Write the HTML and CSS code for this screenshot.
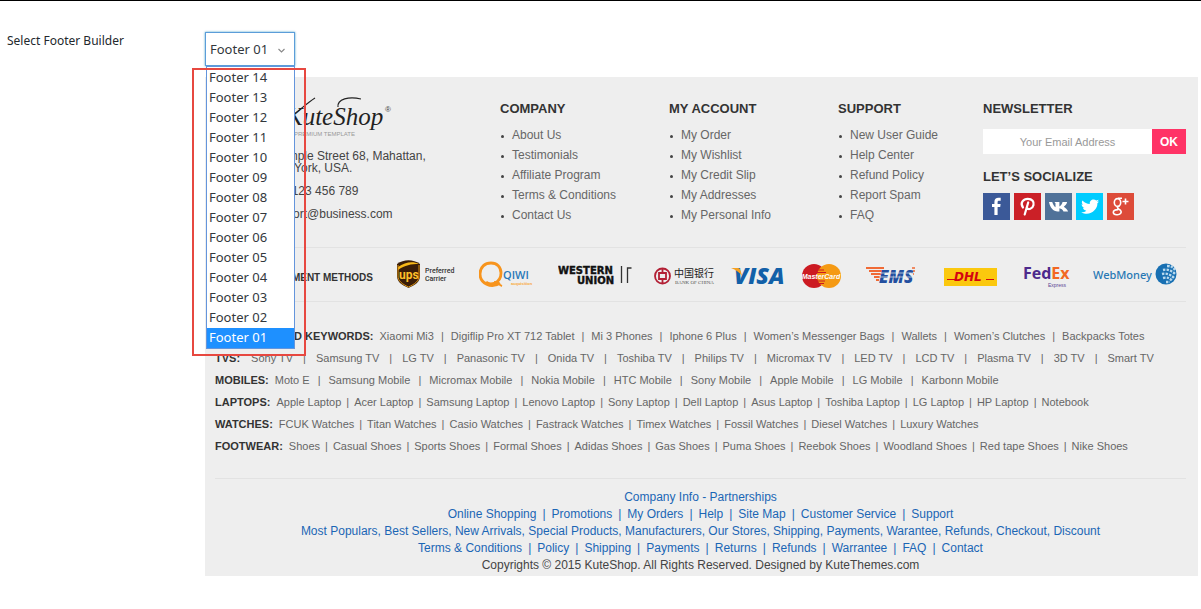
FILE: index.html
```html
<!DOCTYPE html>
<html lang="en">
<head>
<meta charset="utf-8">
<title>Footer Builder</title>
<link rel="stylesheet" href="styles.css">
</head>
<body>
<main class="option-row">
  <label class="option-label" for="footer-select">Select Footer Builder</label>
  <div class="option-field">
    <div class="picker">
      <select class="picker-control" id="footer-select"><option>Footer 01</option></select>
      <svg class="picker-arrow" viewBox="0 0 8 6" aria-hidden="true"><path d="M1 1l3 3 3-3" fill="none" stroke="#888" stroke-width="1.1"/></svg>
      <select class="picker-list" size="14" aria-label="Footer options">
        <option>Footer 14</option><option>Footer 13</option><option>Footer 12</option><option>Footer 11</option>
        <option>Footer 10</option><option>Footer 09</option><option>Footer 08</option><option>Footer 07</option>
        <option>Footer 06</option><option>Footer 05</option><option>Footer 04</option><option>Footer 03</option>
        <option>Footer 02</option><option selected>Footer 01</option>
      </select>
      <div class="highlight"></div>
    </div>

    <footer class="preview">
      <section class="columns">
        <address class="contact">
          <svg class="brand" viewBox="0 0 190 44" role="img" aria-label="KuteShop">
            <text x="71" y="30" font-family="Liberation Serif" font-style="italic" font-size="25" fill="#222">KuteShop</text>
            <path d="M74 23C84 16 92 8 100 3M123 12C122 4 134 1 146 4" fill="none" stroke="#222" stroke-width="1.2"/>
            <text x="170" y="17" font-family="Liberation Sans" font-size="8" fill="#444">®</text>
            <text x="140" y="41" text-anchor="end" font-family="Liberation Sans" font-size="6" fill="#999">PREMIUM TEMPLATE</text>
          </svg>
          <p class="street">Example Street 68, Mahattan,<br>New York, USA.</p>
          <p class="line">(00) 123 456 789</p>
          <p class="line">support@business.com</p>
        </address>
        <nav>
          <h2>COMPANY</h2>
          <ul class="links"><li><a href="#">About Us</a></li><li><a href="#">Testimonials</a></li><li><a href="#">Affiliate Program</a></li><li><a href="#">Terms &amp; Conditions</a></li><li><a href="#">Contact Us</a></li></ul>
        </nav>
        <nav>
          <h2>MY ACCOUNT</h2>
          <ul class="links"><li><a href="#">My Order</a></li><li><a href="#">My Wishlist</a></li><li><a href="#">My Credit Slip</a></li><li><a href="#">My Addresses</a></li><li><a href="#">My Personal Info</a></li></ul>
        </nav>
        <nav>
          <h2>SUPPORT</h2>
          <ul class="links"><li><a href="#">New User Guide</a></li><li><a href="#">Help Center</a></li><li><a href="#">Refund Policy</a></li><li><a href="#">Report Spam</a></li><li><a href="#">FAQ</a></li></ul>
        </nav>
        <div>
          <h2>NEWSLETTER</h2>
          <form class="subscribe">
            <input type="email" placeholder="Your Email Address" aria-label="Your Email Address">
            <button type="button">OK</button>
          </form>
          <h2>LET’S SOCIALIZE</h2>
          <div class="social">
            <a href="#" aria-label="Facebook"><svg viewBox="0 0 27 27"><path fill="#3b5998" d="M0 0h27v27H0z"/><path fill="#fff" d="M11.400 22v-8H9v-3h2.400V9c0-2.900 1.600-4.200 4-4.200h2.300v3h-1.600c-1.200 0-1.500.5-1.500 1.500V11h3l-.4 3h-2.600v8z"/></svg></a>
            <a href="#" aria-label="Pinterest"><svg viewBox="0 0 27 27"><path fill="#cb2027" d="M0 0h27v27H0z"/><path fill="none" stroke="#fff" stroke-width="2.200" stroke-linecap="round" d="M9 14.500C5.500 10 9.500 5.800 13.800 5.800c4.500 0 6.500 3 5.700 6.200-.9 4-5.200 5.300-6.900 2.600M14.200 9.500L10.700 21.500"/></svg></a>
            <a href="#" aria-label="VK"><svg viewBox="0 0 27 27"><path fill="#507299" d="M0 0h27v27H0z"/><path fill="#fff" d="M4 9h3.200c.9 2.500 2 4.500 3.300 5.200v-4L9.400 9h5v4.500c1.500-.8 2.600-2.600 3.200-4.500h4.500c-.3 2-1.900 3.700-3.300 4.800 1.700 1 3.500 2.700 4.300 4.700h-4.600c-.8-1.700-2.200-3-4.100-3.300v3.300h-1.700C8.200 18.500 5 14.500 4 9z"/></svg></a>
            <a href="#" aria-label="Twitter"><svg viewBox="0 0 27 27"><path fill="#0cf" d="M0 0h27v27H0z"/><path fill="#fff" d="M6.500 7.500c2 2.200 4.500 3.500 7.300 3.600-.7-3.800 3.700-6 6.500-3.500l2.400-.9-1.500 2.200 2-.5-1.800 1.900c.3 6.500-7.700 13.500-16.200 8.900 2 .1 3.700-.4 5.100-1.500-1.800-.2-2.800-1.200-3.300-2.600h1.500c-1.800-.7-2.800-1.900-2.900-3.800l1.600.5C5.600 10.500 5.500 9 6.500 7.500z"/></svg></a>
            <a href="#" aria-label="Google Plus"><svg viewBox="0 0 27 27"><path fill="#dd4b39" d="M0 0h27v27H0z"/><g fill="none" stroke="#fff" stroke-width="1.600"><ellipse cx="10.500" cy="9.500" rx="3.200" ry="3.900"/><path d="M15 5.200h-4M12.500 13c-3 1-2.500 2.200-.5 3.200 2.500 1.200 2.600 3.100 1.500 4.400-1.500 1.800-6.800 1.500-7.200-1-.3-2.200 2.300-3.100 5-3M18.500 5.500v6M15.500 8.500h6"/></g></svg></a>
          </div>
        </div>
      </section>

      <section class="payments">
        <h3>PAYMENT METHODS</h3>
        <div class="logos">
          <svg width="82" height="30" viewBox="0 0 82 30" role="img" aria-label="UPS Preferred Carrier"><path d="M0 4c7-5 16-5 23 0v12c0 6-5 9-11.500 12C5 25 0 22 0 16z" fill="#3a1d08"/><path d="M1 7c7-5 15-6 21-3-8 0-14 1-21 6z" fill="#f7b718"/><path d="M1 5v11c0 5 4 8 10.500 11C18 24 22 21 22 16V5" fill="none" stroke="#d99212"/><text x="2" y="19" font-family="Roboto" font-weight="bold" font-size="12" fill="#ffc02a">ups</text><g font-family="Roboto" font-weight="500" font-size="7" fill="#333"><text x="28" y="13">Preferred</text><text x="28" y="21">Carrier</text></g></svg>
          <svg width="79" height="30" viewBox="0 0 79 30" role="img" aria-label="QIWI"><path d="M21 23C12 29 1 23 1 14 1 7 6 3 12 3c6 0 10 4 10 10 0 5-2 8-6 10-3 1-7 1-9-1" fill="none" stroke="#f7941d" stroke-width="2.800"/><path d="M15 22c3 0 5 3 8 4" fill="none" stroke="#f7941d" stroke-width="2"/><text x="24" y="19" font-family="Open Sans" font-size="11" font-weight="600" fill="#2878b8">QIWI</text><text x="32" y="25" font-family="Liberation Sans" font-size="4" font-weight="bold" fill="#f9a732">acquisition</text></svg>
          <svg width="96" height="30" viewBox="0 0 96 30" role="img" aria-label="Western Union"><g font-family="DejaVu Sans" font-weight="bold" font-size="10" fill="#111" stroke="#111" stroke-width=".4"><text x="0" y="14">WESTERN</text><text x="19" y="24">UNION</text></g><path d="M63.500 6v17M69.500 23V8h4" fill="none" stroke="#333" stroke-width="1.300"/></svg>
          <svg width="77" height="30" viewBox="0 0 77 30" role="img" aria-label="Bank of China"><circle cx="8.500" cy="16" r="7.500" fill="none" stroke="#b32035" stroke-width="1.800"/><path d="M5 13h7v6H5zM8.500 9v4M8.500 19v4" fill="none" stroke="#b32035" stroke-width="1.800"/><text x="20" y="17" font-family="Noto Sans CJK SC" font-size="10" fill="#222">中国银行</text><text x="21" y="24" font-family="Liberation Serif" font-size="5" fill="#555">BANK OF CHINA</text></svg>
          <svg width="71" height="30" viewBox="0 0 71 30" role="img" aria-label="Visa"><text x="3" y="24" font-family="Open Sans" font-weight="800" font-style="italic" font-size="23" fill="#1260a8">VISA</text><path d="M0 8h7c2 0 3 3 4 8C8 12 5 10 0 8z" fill="#f5a020"/></svg>
          <svg width="64" height="30" viewBox="0 0 64 30" role="img" aria-label="MasterCard"><circle cx="12" cy="16" r="12" fill="#cc1a22"/><circle cx="27" cy="16" r="12" fill="#f59a14"/><path d="M16 10h6M15 12.500h9M15 21h8M16 23.500h6" stroke="#cc1a22"/><text x="19" y="19" text-anchor="middle" font-family="Liberation Sans" font-weight="bold" font-style="italic" font-size="7" fill="#fff">MasterCard</text></svg>
          <svg width="78" height="30" viewBox="0 0 78 30" role="img" aria-label="EMS"><path d="M0 8h18M3 11h13M5 14h10M8 17h6M10 20h3" stroke="#f06a35" stroke-width="2"/><text x="13" y="23" font-family="Open Sans" font-weight="800" font-style="italic" font-size="17" fill="#234f9f">EMS</text><path d="M14 13h35M13 17h35" stroke="#eee" stroke-width=".7"/><path d="M46 8h3M47 11h2M47 14h1" stroke="#f06a35" stroke-width="1.500"/></svg>
          <svg width="79" height="30" viewBox="0 0 79 30" role="img" aria-label="DHL"><path fill="#fbc80e" d="M0 8h53v18H0z"/><path d="M3 19.500h8M42 19.500h8" stroke="#d40511"/><text x="10" y="21" font-family="DejaVu Sans" font-weight="bold" font-style="italic" font-size="12" fill="#d40511">DHL</text></svg>
          <svg width="70" height="30" viewBox="0 0 70 30" role="img" aria-label="FedEx Express"><text x="0" y="19" font-family="Open Sans" font-weight="bold" font-size="16" fill="#4d2a8c">Fed<tspan fill="#f26722">Ex</tspan></text><text x="25" y="27" font-family="Liberation Sans" font-size="5" fill="#5b4595">Express</text></svg>
          <svg width="84" height="30" viewBox="0 0 84 30" role="img" aria-label="WebMoney"><text x="0" y="19" font-family="Noto Sans" font-weight="500" font-size="11" fill="#2878b4">WebMoney</text><circle cx="73" cy="14" r="10.500" fill="#176fb2"/><g fill="none" stroke="#b9d9ee" stroke-width="2.400" stroke-dasharray="2.400 1.200"><path d="M74 6c4 0 6 1 8 4M70 10c4-1 8 0 12 4M69 14c4-1 8 0 12 4M70 18c4-1 7 0 9 3M73 22h4"/></g></svg>
        </div>
      </section>

      <section class="keywords">
        <div class="tags tags-medium"><h3>TOP SEARCHED KEYWORDS:</h3><ul><li><a href="#">Xiaomi Mi3</a></li><li><a href="#">Digiflip Pro XT 712 Tablet</a></li><li><a href="#">Mi 3 Phones</a></li><li><a href="#">Iphone 6 Plus</a></li><li><a href="#">Women’s Messenger Bags</a></li><li><a href="#">Wallets</a></li><li><a href="#">Women’s Clutches</a></li><li><a href="#">Backpacks Totes</a></li></ul></div>
        <div class="tags tags-wide"><h3>TVS:</h3><ul><li><a href="#">Sony TV</a></li><li><a href="#">Samsung TV</a></li><li><a href="#">LG TV</a></li><li><a href="#">Panasonic TV</a></li><li><a href="#">Onida TV</a></li><li><a href="#">Toshiba TV</a></li><li><a href="#">Philips TV</a></li><li><a href="#">Micromax TV</a></li><li><a href="#">LED TV</a></li><li><a href="#">LCD TV</a></li><li><a href="#">Plasma TV</a></li><li><a href="#">3D TV</a></li><li><a href="#">Smart TV</a></li></ul></div>
        <div class="tags tags-roomy"><h3>MOBILES:</h3><ul><li><a href="#">Moto E</a></li><li><a href="#">Samsung Mobile</a></li><li><a href="#">Micromax Mobile</a></li><li><a href="#">Nokia Mobile</a></li><li><a href="#">HTC Mobile</a></li><li><a href="#">Sony Mobile</a></li><li><a href="#">Apple Mobile</a></li><li><a href="#">LG Mobile</a></li><li><a href="#">Karbonn Mobile</a></li></ul></div>
        <div class="tags"><h3>LAPTOPS:</h3><ul><li><a href="#">Apple Laptop</a></li><li><a href="#">Acer Laptop</a></li><li><a href="#">Samsung Laptop</a></li><li><a href="#">Lenovo Laptop</a></li><li><a href="#">Sony Laptop</a></li><li><a href="#">Dell Laptop</a></li><li><a href="#">Asus Laptop</a></li><li><a href="#">Toshiba Laptop</a></li><li><a href="#">LG Laptop</a></li><li><a href="#">HP Laptop</a></li><li><a href="#">Notebook</a></li></ul></div>
        <div class="tags"><h3>WATCHES:</h3><ul><li><a href="#">FCUK Watches</a></li><li><a href="#">Titan Watches</a></li><li><a href="#">Casio Watches</a></li><li><a href="#">Fastrack Watches</a></li><li><a href="#">Timex Watches</a></li><li><a href="#">Fossil Watches</a></li><li><a href="#">Diesel Watches</a></li><li><a href="#">Luxury Watches</a></li></ul></div>
        <div class="tags"><h3>FOOTWEAR:</h3><ul><li><a href="#">Shoes</a></li><li><a href="#">Casual Shoes</a></li><li><a href="#">Sports Shoes</a></li><li><a href="#">Formal Shoes</a></li><li><a href="#">Adidas Shoes</a></li><li><a href="#">Gas Shoes</a></li><li><a href="#">Puma Shoes</a></li><li><a href="#">Reebok Shoes</a></li><li><a href="#">Woodland Shoes</a></li><li><a href="#">Red tape Shoes</a></li><li><a href="#">Nike Shoes</a></li></ul></div>
      </section>

      <section class="legal">
        <p><a href="#">Company Info - Partnerships</a></p>
        <ul><li><a href="#">Online Shopping</a></li><li><a href="#">Promotions</a></li><li><a href="#">My Orders</a></li><li><a href="#">Help</a></li><li><a href="#">Site Map</a></li><li><a href="#">Customer Service</a></li><li><a href="#">Support</a></li></ul>
        <p><a href="#">Most Populars, Best Sellers, New Arrivals, Special Products, Manufacturers, Our Stores, Shipping, Payments, Warantee, Refunds, Checkout, Discount</a></p>
        <ul><li><a href="#">Terms &amp; Conditions</a></li><li><a href="#">Policy</a></li><li><a href="#">Shipping</a></li><li><a href="#">Payments</a></li><li><a href="#">Returns</a></li><li><a href="#">Refunds</a></li><li><a href="#">Warrantee</a></li><li><a href="#">FAQ</a></li><li><a href="#">Contact</a></li></ul>
        <p class="copyright">Copyrights © 2015 KuteShop. All Rights Reserved. Designed by KuteThemes.com</p>
      </section>
    </footer>
  </div>
</main>
</body>
</html>
```
FILE: styles.css
```css
* { box-sizing: border-box; }

body {
  margin: 0;
  border-top: 1px solid #000;
  background: #fff;
  font-family: "Liberation Sans", Arial, sans-serif;
}

h2, h3, p, ul { margin: 0; padding: 0; }
ul { list-style: none; }
a { color: inherit; text-decoration: none; }

.option-row {
  display: grid;
  grid-template-columns: 198px minmax(0, 1fr);
  padding: 31px 3px 0 7px;
}

.option-label {
  font: 12px/18px "Noto Sans", sans-serif;
  color: #23282d;
}

/* Drop-down and its open list */
.picker {
  position: relative;
  width: 90px;
  margin-bottom: 11px;
}

.picker-control {
  display: block;
  width: 100%;
  height: 34px;
  padding: 0 4px;
  border: 1px solid #5b9dd9;
  border-radius: 0;
  outline: 0;
  background: #fff;
  box-shadow: 0 0 2px rgba(30, 140, 190, .8);
  color: #32373c;
  font: 13px "Noto Sans", sans-serif;
  appearance: none;
}

.picker-arrow {
  position: absolute;
  top: 16px;
  right: 9px;
  width: 9px;
  height: 6px;
}

.picker-list {
  position: absolute;
  z-index: 1;
  top: 34px;
  left: 1px;
  width: 89px;
  height: 283px;
  padding: 1px 0 0;
  border: 1px solid #6495dc;
  border-radius: 0;
  outline: 0;
  background: #fff;
  color: #32373c;
  font: 13px "Noto Sans", sans-serif;
  overflow: hidden;
}

.picker-list option {
  height: 20px;
  min-height: 20px;
  padding: 0 2px;
  line-height: 20px;
}

.picker-list option:checked {
  background: #1e90ff linear-gradient(#1e90ff, #1e90ff);
  color: #fff;
}

.highlight {
  position: absolute;
  z-index: 2;
  top: 36px;
  left: -13px;
  width: 114px;
  height: 288px;
  border: 2px solid #e74840;
  pointer-events: none;
}

/* Footer preview */
.preview {
  padding: 0 12px 2px 10px;
  background: #eee;
  color: #666;
}

.columns {
  display: grid;
  grid-template-columns: 285fr 169fr 169fr 145fr 203fr;
  padding: 22px 0;
}

.columns h2 {
  color: #333;
  font-size: 13px;
  line-height: 20px;
}

.links {
  padding: 6px 0 0 12px;
  font-size: 12px;
  line-height: 20px;
}

.links li { display: flex; align-items: center; }

.links li::before {
  content: "";
  width: 3px;
  height: 3px;
  margin: 2px 8px 0 -11px;
  border-radius: 50%;
  background: #444;
}

.contact {
  padding-left: 52px;
  color: #444;
  font-size: 12px;
  font-style: normal;
}

.brand {
  display: block;
  width: 190px;
  height: 44px;
  margin: -4px 0 11px -52px;
}

.street { line-height: 12px; }
.line { margin-top: 9px; line-height: 14px; }
.street + .line { margin-top: 10px; }

.subscribe {
  display: flex;
  margin: 10px 0 13px;
}

.subscribe input {
  flex: 1;
  min-width: 0;
  height: 25px;
  border: 0;
  background: #fff;
  font: 11px "Liberation Sans", Arial, sans-serif;
  text-align: center;
}

.subscribe input::placeholder { color: #999; }

.subscribe button {
  width: 34px;
  padding: 0;
  border: 0;
  background: #f36;
  color: #fff;
  font: bold 12px "Liberation Sans", Arial, sans-serif;
}

.social { display: flex; gap: 4px; margin-top: 6px; }
.social svg { display: block; width: 27px; height: 27px; }

.payments {
  display: flex;
  align-items: center;
  justify-content: space-between;
  padding: 12px 9px 11px 58px;
  border: solid #e2e2e2;
  border-width: 1px 0;
}

.payments h3 {
  padding-top: 4px;
  color: #333;
  font-size: 10px;
  white-space: nowrap;
}

.logos {
  display: flex;
  flex: none;
}

.keywords {
  padding: 23px 0 21px;
  border-bottom: 1px solid #e2e2e2;
  font-size: 11px;
  line-height: 22px;
}

.tags { --gap: 5px; display: flex; gap: 6px; white-space: nowrap; }
.tags-medium { --gap: 7px; }
.tags-roomy { --gap: 8px; }
.tags-wide { --gap: 10px; gap: 11px; }
.tags h3 { color: #333; font-size: 11px; }
.tags ul { display: flex; }

.tags li + li::before {
  content: "|";
  margin: 0 var(--gap);
}

.legal {
  padding-top: 10px;
  color: #1b66b5;
  font-size: 12px;
  line-height: 17px;
  text-align: center;
}

.legal ul { display: flex; justify-content: center; }
.legal li + li::before { content: "|"; margin: 0 6px; }
.copyright { color: #444; }
```
